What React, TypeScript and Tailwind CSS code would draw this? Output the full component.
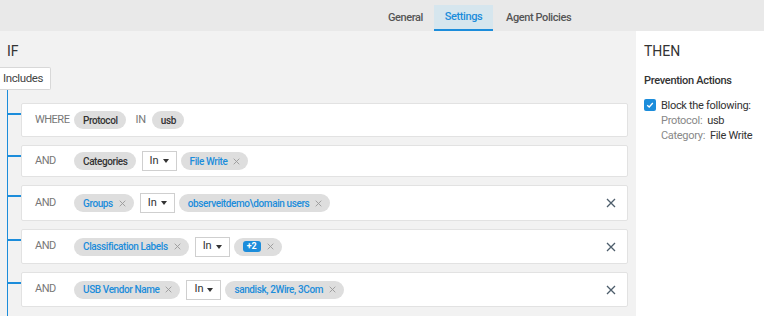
import { ReactNode } from "react";

const BLUE = "text-[#1c8ddb]";

const XIcon = ({ className }: { className?: string }) => (
  <svg viewBox="0 0 10 10" className={className} fill="none" stroke="currentColor" strokeWidth="1.3">
    <path d="M1 1 L9 9 M9 1 L1 9" />
  </svg>
);

const Chip = ({ children, blue, close }: { children: ReactNode; blue?: boolean; close?: boolean }) => (
  <span
    className={`flex items-center shrink-0 h-[18px] pl-[9px] pr-[8px] rounded-full bg-[#dedede] text-[10px] font-medium tracking-[-0.4px] whitespace-nowrap ${
      blue ? BLUE : "text-[#333]"
    }`}
  >
    {children}
    {close && <XIcon className="w-[7px] h-[7px] ml-[6px] text-[#999]" />}
  </span>
);

const InSelect = () => (
  <span className="flex items-center justify-center shrink-0 gap-[4px] ml-[2px] h-[20px] w-[35px] bg-white border border-[#cfcfcf] text-[11px] text-[#333]">
    In
    <svg viewBox="0 0 6 4" className="w-[6px] h-[4px]" fill="#333">
      <path d="M0 0 H6 L3 4 Z" />
    </svg>
  </span>
);

type Row = { label: string; h: string; content: ReactNode; removable?: boolean };

const rows: Row[] = [
  {
    label: "WHERE",
    h: "h-[34px]",
    content: (
      <>
        <Chip>Protocol</Chip>
        <span className="text-[11px] tracking-[-0.3px] text-[#777] ml-[6px] mr-[2px]">IN</span>
        <Chip>usb</Chip>
      </>
    ),
  },
  {
    label: "AND",
    h: "h-[32px]",
    content: (
      <>
        <Chip>Categories</Chip>
        <InSelect />
        <Chip blue close>
          File Write
        </Chip>
      </>
    ),
  },
  {
    label: "AND",
    h: "h-[36px]",
    removable: true,
    content: (
      <>
        <Chip blue close>
          Groups
        </Chip>
        <InSelect />
        <Chip blue close>
          observeitdemo\domain users
        </Chip>
      </>
    ),
  },
  {
    label: "AND",
    h: "h-[35px]",
    removable: true,
    content: (
      <>
        <Chip blue close>
          Classification Labels
        </Chip>
        <InSelect />
        <Chip close>
          <span className="flex items-center h-[11px] px-[4px] rounded-[3px] bg-[#1c8ddb] text-white text-[9px] font-bold tracking-normal">
            +2
          </span>
        </Chip>
      </>
    ),
  },
  {
    label: "AND",
    h: "h-[35px]",
    removable: true,
    content: (
      <>
        <Chip blue close>
          USB Vendor Name
        </Chip>
        <InSelect />
        <Chip blue close>
          sandisk, 2Wire, 3Com
        </Chip>
      </>
    ),
  },
];

export default function App() {
  return (
    <div className="w-[764px] h-[316px] overflow-hidden flex flex-col bg-white font-['Roboto',sans-serif]">
      {/* tabs */}
      <div className="h-[31px] shrink-0 bg-[#e9e9e9] flex items-end pl-[378px] text-[11px] font-medium tracking-[-0.4px] text-[#555]">
        <div className="h-[26px] px-[10px] flex items-center">General</div>
        <div className={`h-[26px] w-[59px] ml-[1px] flex items-center justify-center bg-[#d6e6ee] border-b-2 border-[#1c8ddb] ${BLUE}`}>
          Settings
        </div>
        <div className="h-[26px] px-[13px] flex items-center">Agent Policies</div>
      </div>

      <div className="flex flex-1 min-h-0">
        {/* IF */}
        <div className="flex-1 bg-[#f2f2f2] flex flex-col pr-[8px]">
          <div className="pl-[7px] pt-[11px] text-[14px] leading-[18px] text-[#333]">IF</div>
          <div className="mt-[7px] h-[23px] w-[51px] flex items-center pl-[3px] bg-white border border-l-0 border-[#d8d8d8] rounded-r-[2px] text-[11.5px] tracking-[-0.4px] text-[#444]">
            Includes
          </div>
          <div className="ml-[7px] flex-1 border-l-[1.5px] border-[#1c8ddb] pt-[13px] flex flex-col gap-[8px]">
            {rows.map((row, i) => (
              <div key={i} className="flex items-start">
                <div className="w-[13px] h-[1.5px] mt-[10px] bg-[#1c8ddb] shrink-0" />
                <div
                  className={`flex-1 ${row.h} flex items-center pl-[13px] pr-[11px] bg-white border border-[#e2e2e2] rounded-[2px]`}
                >
                  <span className="w-[39px] shrink-0 text-[11px] tracking-[-0.5px] text-[#777]">{row.label}</span>
                  <div className="flex items-center gap-[4px] flex-1">{row.content}</div>
                  {row.removable && <XIcon className="w-[10px] h-[10px] text-[#4d5d6b]" />}
                </div>
              </div>
            ))}
          </div>
        </div>

        {/* THEN */}
        <div className="w-[128px] shrink-0 bg-white pl-[8px] pt-[11px] text-[#333]">
          <div className="text-[14px] leading-[18px]">THEN</div>
          <div className="mt-[13px] text-[11px] font-medium tracking-[-0.3px]">Prevention Actions</div>
          <div className="mt-[8px] flex items-start gap-[5px] text-[11px] tracking-[-0.3px] leading-[15px]">
            <span className="mt-[1px] w-[12px] h-[12px] rounded-[2px] bg-[#1c8ddb] flex items-center justify-center shrink-0">
              <svg viewBox="0 0 10 10" className="w-[8px] h-[8px]" fill="none" stroke="white" strokeWidth="1.6">
                <path d="M1.5 5.2 L4 7.5 L8.5 2.5" />
              </svg>
            </span>
            <div>
              <div>Block the following:</div>
              <div>
                <span className="text-[#888]">Protocol:</span>&nbsp; usb
              </div>
              <div>
                <span className="text-[#888]">Category:</span>&nbsp; File Write
              </div>
            </div>
          </div>
        </div>
      </div>
    </div>
  );
}
